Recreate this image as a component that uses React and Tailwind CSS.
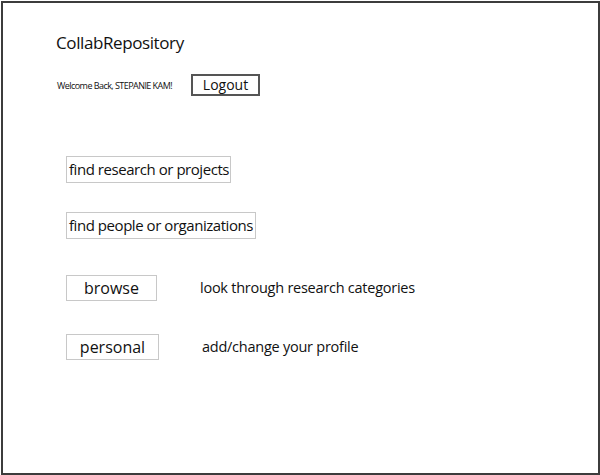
const font = { fontFamily: '"Open Sans", "Noto Sans", sans-serif' };

const Box = ({ children, className = "" }) => (
  <div
    className={`flex items-center border border-[#c8c8c8] bg-white leading-none text-[#111] whitespace-nowrap ${className}`}
  >
    {children}
  </div>
);

export default function App() {
  return (
    <div className="w-[600px] h-[475px] bg-white pl-px pt-px" style={font}>
      <div className="w-[599px] h-[474px] border-2 border-[#3c3c3c] pl-[53px] pt-[30px]">
        <h1 className="text-[17px] leading-[20px] text-[#111] tracking-[-0.4px]">
          CollabRepository
        </h1>

        <div className="flex items-center mt-[21px]">
          <span className="text-[9px] leading-none tracking-[-0.55px] text-[#111] w-[135px] pl-px whitespace-nowrap">
            Welcome Back, STEPANIE KAM!
          </span>
          <div className="flex items-center justify-center w-[69px] h-[22px] border-2 border-[#555] text-[14px] leading-none text-[#111]">
            Logout
          </div>
        </div>

        <div className="flex flex-col mt-[60px] ml-[10px] gap-[29px]">
          <Box className="w-[165px] h-[27px] pl-[2px] text-[15px] tracking-[-0.45px]">
            find research or projects
          </Box>
          <Box className="w-[190px] h-[27px] pl-[2px] text-[15px] tracking-[-0.45px]">
            find people or organizations
          </Box>
        </div>

        <div className="flex items-center mt-[36px] ml-[10px]">
          <Box className="w-[91px] h-[26px] justify-center text-[16px]">browse</Box>
          <span className="ml-[43px] text-[14.5px] leading-none text-[#111] tracking-[-0.25px] whitespace-nowrap">
            look through research categories
          </span>
        </div>

        <div className="flex items-center mt-[33px] ml-[10px]">
          <Box className="w-[93px] h-[26px] justify-center text-[16px]">personal</Box>
          <span className="ml-[43px] text-[14.5px] leading-none text-[#111] tracking-[-0.25px] whitespace-nowrap">
            add/change your profile
          </span>
        </div>
      </div>
    </div>
  );
}
